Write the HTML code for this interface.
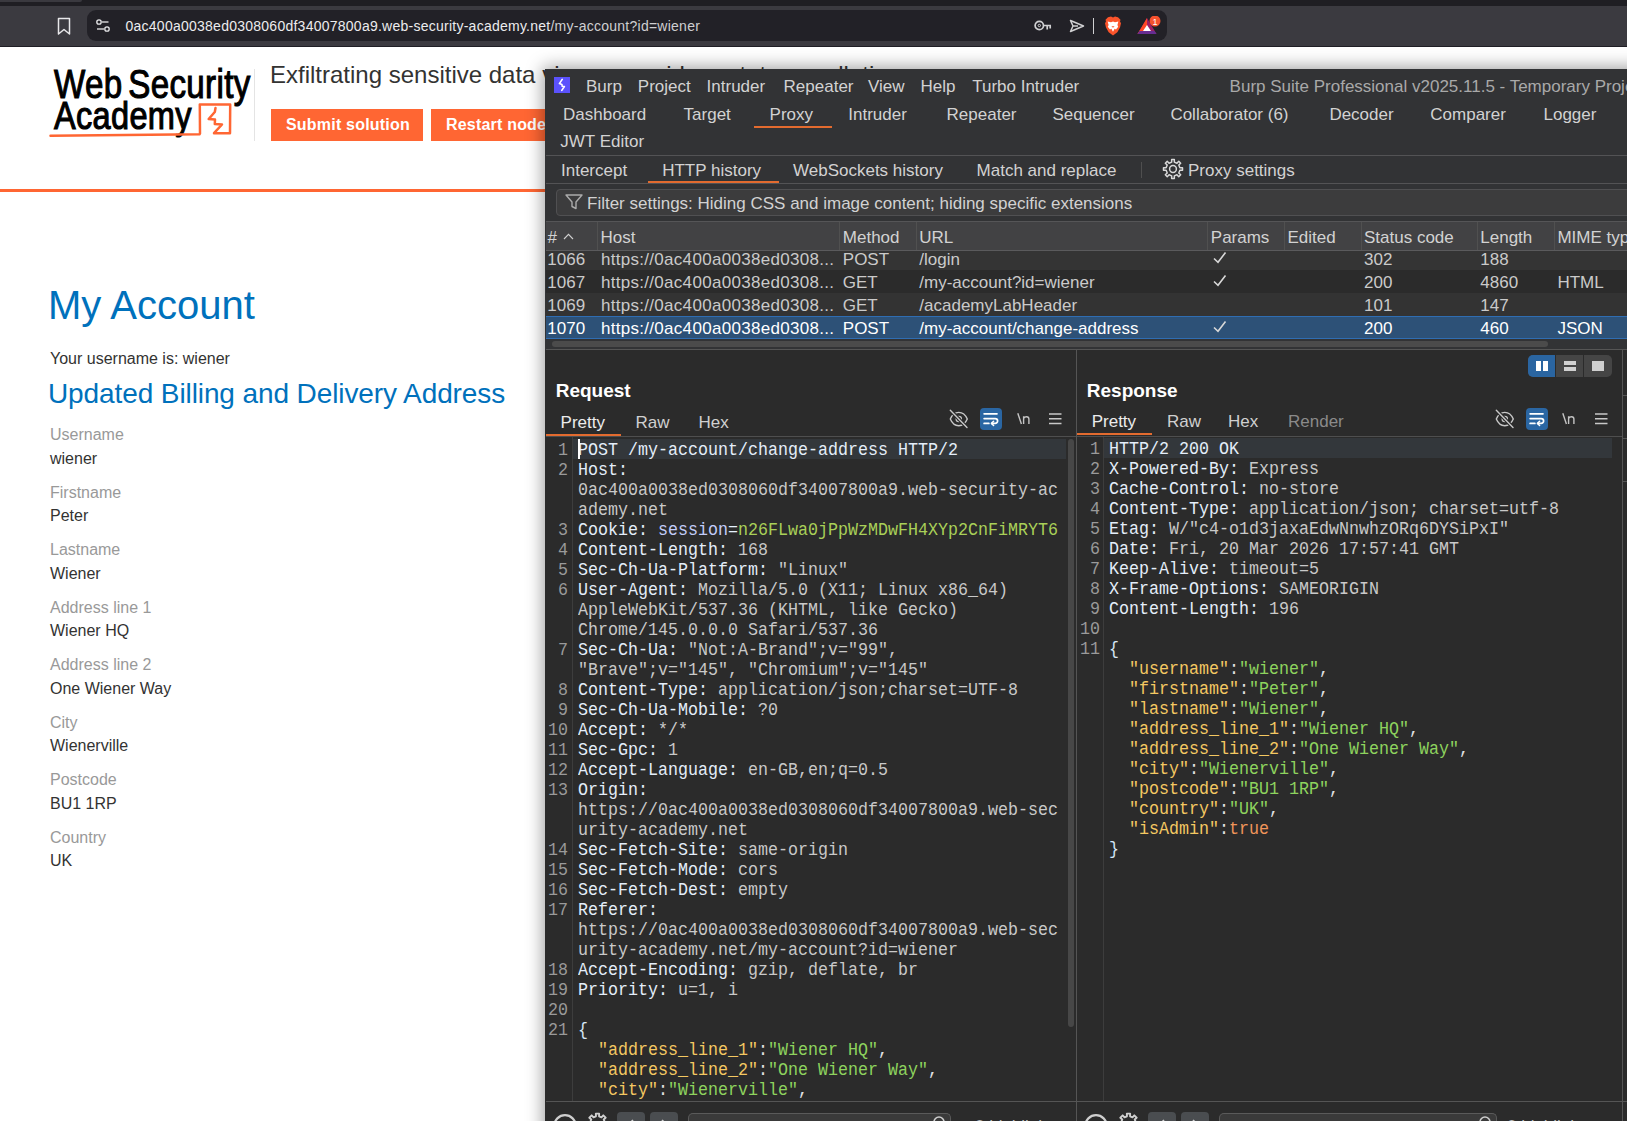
<!DOCTYPE html>
<html><head><meta charset="utf-8"><title>My Account</title>
<style>
html,body{margin:0;padding:0;width:1627px;height:1121px;overflow:hidden;background:#ffffff;position:relative}
.t{position:absolute;white-space:pre}
.c{position:absolute;white-space:pre;font-family:'Liberation Mono', monospace;font-size:17.5px;line-height:20px;transform-origin:0 0;transform:scaleX(0.95238)}
</style></head><body>
<div style="position:absolute;left:0px;top:0px;width:1627px;height:6px;background:#1f1e23;"></div>
<div style="position:absolute;left:0px;top:0px;width:82px;height:2px;background:#3a393f;border-radius:0 0 6px 0"></div>
<div style="position:absolute;left:0px;top:6px;width:1627px;height:40px;background:#3b3a40;"></div>
<div style="position:absolute;left:0px;top:46px;width:1627px;height:1px;background:#1f1e25;"></div>
<div style="position:absolute;left:87px;top:10px;width:1080px;height:31px;background:#222127;border-radius:9px"></div>
<svg style="position:absolute;left:55px;top:16px" width="18" height="20" viewBox="0 0 18 20"><path d="M3.5 2.5 H14.5 V18 L9 13.5 L3.5 18 Z" fill="none" stroke="#e8e8ea" stroke-width="1.5" stroke-linejoin="round"/></svg>
<svg style="position:absolute;left:95px;top:18px" width="16" height="16" viewBox="0 0 16 16"><circle cx="4" cy="4" r="2.2" fill="none" stroke="#e8e8ea" stroke-width="1.3"/><line x1="7" y1="4" x2="13.5" y2="4" stroke="#e8e8ea" stroke-width="1.3"/><circle cx="12" cy="11" r="2.2" fill="none" stroke="#e8e8ea" stroke-width="1.3"/><line x1="2" y1="11" x2="9" y2="11" stroke="#e8e8ea" stroke-width="1.3"/></svg>
<div style="position:absolute;left:125.5px;top:15.5px;font-family:'Liberation Sans', sans-serif;font-size:14px;line-height:20px;letter-spacing:0.25px;white-space:pre;color:#ececee">0ac400a0038ed0308060df34007800a9.web-security-academy.net<span style="color:#cfcfd1">/my-account?id=wiener</span></div>
<svg style="position:absolute;left:1034px;top:19px" width="18" height="14" viewBox="0 0 18 14"><circle cx="5.3" cy="6.5" r="4.2" fill="none" stroke="#d0d0d2" stroke-width="1.7"/><circle cx="5.3" cy="6.5" r="1.2" fill="none" stroke="#d0d0d2" stroke-width="1"/><path d="M9.5 6.5 H17 M13.2 6.5 V10.5 M16.2 6.5 V9.5" fill="none" stroke="#d0d0d2" stroke-width="1.7"/></svg>
<svg style="position:absolute;left:1069px;top:19px" width="16" height="14" viewBox="0 0 16 14"><path d="M1.5 1.5 L14.5 7 L1.5 12.5 L4 7 Z M4 7 H9" fill="none" stroke="#d0d0d2" stroke-width="1.5" stroke-linejoin="round"/></svg>
<div style="position:absolute;left:1093px;top:18px;width:1px;height:16px;background:#d0d0d2;"></div>
<svg style="position:absolute;left:1104px;top:16px" width="18" height="20" viewBox="0 0 18 20"><path d="M4 1.2 L7 0.6 L9 1.4 L11 0.6 L14 1.2 L16.5 3.8 L16 5.6 L17 7.2 L16 11.5 L13.3 16.2 L9 19.6 L4.7 16.2 L2 11.5 L1 7.2 L2 5.6 L1.5 3.8 Z" fill="#fb542b"/><path d="M3.6 5.4 L7 6.2 L9 5.4 L11 6.2 L14.4 5.4 L13.4 9 L14.2 10.8 L12 13.4 L10.6 12.8 L9 15.8 L7.4 12.8 L6 13.4 L3.8 10.8 L4.6 9 Z" fill="#ffffff"/><path d="M7.4 10.2 L9 11.8 L10.6 10.2 Z" fill="#fb542b"/></svg>
<svg style="position:absolute;left:1137px;top:16px" width="24" height="20" viewBox="0 0 24 20"><path d="M10 2 L19.5 18 H0.5 Z" fill="#9e1f63"/><path d="M10 2 L0.5 18 H6 L10 11 Z" fill="#ff4724"/><path d="M0.5 18 H19.5 L17.5 15 H2.5 Z" fill="#662d91"/><path d="M10 9 L14 15 H6 Z" fill="#ffffff"/><circle cx="18" cy="5" r="5.5" fill="#f4512e"/><text x="18" y="8.5" font-family="Liberation Sans" font-size="9" fill="#fff" text-anchor="middle">1</text></svg>
<div style="position:absolute;left:53.5px;top:62.4px;font-family:'Liberation Sans', sans-serif;font-size:40px;font-weight:400;line-height:45px;color:#000;letter-spacing:0.4px;word-spacing:-4.5px;transform-origin:0 0;transform:scaleX(0.828);white-space:pre;-webkit-text-stroke:1.1px #000">Web Security</div>
<div style="position:absolute;left:53.5px;top:93.8px;font-family:'Liberation Sans', sans-serif;font-size:38px;font-weight:400;line-height:45px;color:#000;letter-spacing:0.4px;transform-origin:0 0;transform:scaleX(0.855);white-space:pre;-webkit-text-stroke:1.1px #000">Academy</div>
<svg style="position:absolute;left:40px;top:95px" width="200" height="50" viewBox="40 95 200 50"><path d="M50.5 135.8 Q120 135.3 199.5 134.2 L200 133.5 L199.8 104.6 L230.2 104.4 L230 133.2 L214 133.2 L222 124.5 L214.8 124 L215 119.5 L208.7 119 L214.8 112 L215.5 108" fill="none" stroke="#ff6633" stroke-width="2.5" stroke-linejoin="round" stroke-linecap="round"/></svg>
<div style="position:absolute;left:254px;top:69px;width:1px;height:72px;background:#e4e4e4;"></div>
<div class="t" style="left:270.00px;top:59.88px;font-family:'Liberation Sans', sans-serif;font-size:24px;line-height:30px;color:#333332;font-weight:400;">Exfiltrating sensitive data via server-side prototype pollution</div>
<div style="position:absolute;left:271px;top:109px;width:152px;height:32px;background:#ff6633;"></div>
<div class="t" style="left:286.00px;top:115.45px;font-family:'Liberation Sans', sans-serif;font-size:16px;line-height:20px;color:#ffffff;font-weight:700;letter-spacing:0.2px">Submit solution</div>
<div style="position:absolute;left:431px;top:109px;width:152px;height:32px;background:#ff6633;"></div>
<div class="t" style="left:446.00px;top:115.45px;font-family:'Liberation Sans', sans-serif;font-size:16px;line-height:20px;color:#ffffff;font-weight:700;letter-spacing:0.2px">Restart node</div>
<div style="position:absolute;left:0px;top:189px;width:545px;height:3px;background:#ff6633;"></div>
<div class="t" style="left:48.00px;top:280.13px;font-family:'Liberation Sans', sans-serif;font-size:40px;line-height:50px;color:#0071bc;font-weight:400;">My Account</div>
<div class="t" style="left:50.00px;top:349.25px;font-family:'Liberation Sans', sans-serif;font-size:16px;line-height:20px;color:#333332;font-weight:400;">Your username is: wiener</div>
<div class="t" style="left:48.00px;top:375.79px;font-family:'Liberation Sans', sans-serif;font-size:28px;line-height:35px;color:#0071bc;font-weight:400;letter-spacing:-0.1px">Updated Billing and Delivery Address</div>
<div class="t" style="left:50.00px;top:425.45px;font-family:'Liberation Sans', sans-serif;font-size:16px;line-height:20px;color:#999999;font-weight:400;">Username</div>
<div class="t" style="left:50.00px;top:448.95px;font-family:'Liberation Sans', sans-serif;font-size:16px;line-height:20px;color:#333332;font-weight:400;">wiener</div>
<div class="t" style="left:50.00px;top:482.95px;font-family:'Liberation Sans', sans-serif;font-size:16px;line-height:20px;color:#999999;font-weight:400;">Firstname</div>
<div class="t" style="left:50.00px;top:506.45px;font-family:'Liberation Sans', sans-serif;font-size:16px;line-height:20px;color:#333332;font-weight:400;">Peter</div>
<div class="t" style="left:50.00px;top:540.45px;font-family:'Liberation Sans', sans-serif;font-size:16px;line-height:20px;color:#999999;font-weight:400;">Lastname</div>
<div class="t" style="left:50.00px;top:563.95px;font-family:'Liberation Sans', sans-serif;font-size:16px;line-height:20px;color:#333332;font-weight:400;">Wiener</div>
<div class="t" style="left:50.00px;top:597.95px;font-family:'Liberation Sans', sans-serif;font-size:16px;line-height:20px;color:#999999;font-weight:400;">Address line 1</div>
<div class="t" style="left:50.00px;top:621.45px;font-family:'Liberation Sans', sans-serif;font-size:16px;line-height:20px;color:#333332;font-weight:400;">Wiener HQ</div>
<div class="t" style="left:50.00px;top:655.45px;font-family:'Liberation Sans', sans-serif;font-size:16px;line-height:20px;color:#999999;font-weight:400;">Address line 2</div>
<div class="t" style="left:50.00px;top:678.95px;font-family:'Liberation Sans', sans-serif;font-size:16px;line-height:20px;color:#333332;font-weight:400;">One Wiener Way</div>
<div class="t" style="left:50.00px;top:712.95px;font-family:'Liberation Sans', sans-serif;font-size:16px;line-height:20px;color:#999999;font-weight:400;">City</div>
<div class="t" style="left:50.00px;top:736.45px;font-family:'Liberation Sans', sans-serif;font-size:16px;line-height:20px;color:#333332;font-weight:400;">Wienerville</div>
<div class="t" style="left:50.00px;top:770.45px;font-family:'Liberation Sans', sans-serif;font-size:16px;line-height:20px;color:#999999;font-weight:400;">Postcode</div>
<div class="t" style="left:50.00px;top:793.95px;font-family:'Liberation Sans', sans-serif;font-size:16px;line-height:20px;color:#333332;font-weight:400;">BU1 1RP</div>
<div class="t" style="left:50.00px;top:827.95px;font-family:'Liberation Sans', sans-serif;font-size:16px;line-height:20px;color:#999999;font-weight:400;">Country</div>
<div class="t" style="left:50.00px;top:851.45px;font-family:'Liberation Sans', sans-serif;font-size:16px;line-height:20px;color:#333332;font-weight:400;">UK</div>
<div style="position:absolute;left:545px;top:69px;width:1102px;height:1072px;background:#2b2b2b;box-shadow:0 0 16px 2px rgba(0,0,0,0.38)"></div>
<div style="position:absolute;left:545px;top:69px;width:1082px;height:152px;background:#323335;"></div>
<div style="position:absolute;left:545px;top:184px;width:1082px;height:37px;background:#323335;"></div>
<svg style="position:absolute;left:554px;top:77px" width="16" height="16" viewBox="0 0 16 16"><rect width="16" height="16" fill="#5b52fc"/><path d="M8.2 2.4 L5.4 6.6 L7.9 7.5 L8.2 9.3 L10.4 9.5 L7.8 13.4" fill="none" stroke="#fff" stroke-width="1.6" stroke-linejoin="round" stroke-linecap="round"/></svg>
<div class="t" style="left:586.00px;top:75.61px;font-family:'Liberation Sans', sans-serif;font-size:17px;line-height:21px;color:#d2d2d2;font-weight:400;">Burp</div>
<div class="t" style="left:637.80px;top:75.61px;font-family:'Liberation Sans', sans-serif;font-size:17px;line-height:21px;color:#d2d2d2;font-weight:400;">Project</div>
<div class="t" style="left:706.60px;top:75.61px;font-family:'Liberation Sans', sans-serif;font-size:17px;line-height:21px;color:#d2d2d2;font-weight:400;">Intruder</div>
<div class="t" style="left:783.60px;top:75.61px;font-family:'Liberation Sans', sans-serif;font-size:17px;line-height:21px;color:#d2d2d2;font-weight:400;">Repeater</div>
<div class="t" style="left:868.00px;top:75.61px;font-family:'Liberation Sans', sans-serif;font-size:17px;line-height:21px;color:#d2d2d2;font-weight:400;">View</div>
<div class="t" style="left:920.60px;top:75.61px;font-family:'Liberation Sans', sans-serif;font-size:17px;line-height:21px;color:#d2d2d2;font-weight:400;">Help</div>
<div class="t" style="left:972.20px;top:75.61px;font-family:'Liberation Sans', sans-serif;font-size:17px;line-height:21px;color:#d2d2d2;font-weight:400;">Turbo Intruder</div>
<div class="t" style="left:1229.60px;top:75.61px;font-family:'Liberation Sans', sans-serif;font-size:17px;line-height:21px;color:#a9a9a9;font-weight:400;">Burp Suite Professional v2025.11.5 - Temporary Project</div>
<div class="t" style="left:563.00px;top:104.11px;font-family:'Liberation Sans', sans-serif;font-size:17px;line-height:21px;color:#d2d2d2;font-weight:400;">Dashboard</div>
<div class="t" style="left:683.60px;top:104.11px;font-family:'Liberation Sans', sans-serif;font-size:17px;line-height:21px;color:#d2d2d2;font-weight:400;">Target</div>
<div class="t" style="left:769.60px;top:104.11px;font-family:'Liberation Sans', sans-serif;font-size:17px;line-height:21px;color:#d2d2d2;font-weight:400;">Proxy</div>
<div class="t" style="left:848.30px;top:104.11px;font-family:'Liberation Sans', sans-serif;font-size:17px;line-height:21px;color:#d2d2d2;font-weight:400;">Intruder</div>
<div class="t" style="left:946.60px;top:104.11px;font-family:'Liberation Sans', sans-serif;font-size:17px;line-height:21px;color:#d2d2d2;font-weight:400;">Repeater</div>
<div class="t" style="left:1052.40px;top:104.11px;font-family:'Liberation Sans', sans-serif;font-size:17px;line-height:21px;color:#d2d2d2;font-weight:400;">Sequencer</div>
<div class="t" style="left:1170.40px;top:104.11px;font-family:'Liberation Sans', sans-serif;font-size:17px;line-height:21px;color:#d2d2d2;font-weight:400;">Collaborator (6)</div>
<div class="t" style="left:1329.40px;top:104.11px;font-family:'Liberation Sans', sans-serif;font-size:17px;line-height:21px;color:#d2d2d2;font-weight:400;">Decoder</div>
<div class="t" style="left:1430.30px;top:104.11px;font-family:'Liberation Sans', sans-serif;font-size:17px;line-height:21px;color:#d2d2d2;font-weight:400;">Comparer</div>
<div class="t" style="left:1543.50px;top:104.11px;font-family:'Liberation Sans', sans-serif;font-size:17px;line-height:21px;color:#d2d2d2;font-weight:400;">Logger</div>
<div style="position:absolute;left:754px;top:126px;width:78px;height:2px;background:#e36b2f;"></div>
<div class="t" style="left:560.30px;top:131.31px;font-family:'Liberation Sans', sans-serif;font-size:17px;line-height:21px;color:#d2d2d2;font-weight:400;">JWT Editor</div>
<div style="position:absolute;left:546px;top:155px;width:1082px;height:1px;background:#535355;"></div>
<div class="t" style="left:561.00px;top:159.81px;font-family:'Liberation Sans', sans-serif;font-size:17px;line-height:21px;color:#d2d2d2;font-weight:400;">Intercept</div>
<div class="t" style="left:662.20px;top:159.81px;font-family:'Liberation Sans', sans-serif;font-size:17px;line-height:21px;color:#d2d2d2;font-weight:400;">HTTP history</div>
<div class="t" style="left:793.00px;top:159.81px;font-family:'Liberation Sans', sans-serif;font-size:17px;line-height:21px;color:#d2d2d2;font-weight:400;">WebSockets history</div>
<div class="t" style="left:976.60px;top:159.81px;font-family:'Liberation Sans', sans-serif;font-size:17px;line-height:21px;color:#d2d2d2;font-weight:400;">Match and replace</div>
<div class="t" style="left:1188.00px;top:159.81px;font-family:'Liberation Sans', sans-serif;font-size:17px;line-height:21px;color:#d2d2d2;font-weight:400;">Proxy settings</div>
<div style="position:absolute;left:648px;top:181px;width:131px;height:2px;background:#e36b2f;"></div>
<div style="position:absolute;left:1141px;top:162px;width:1px;height:16px;background:#4f4f4f;"></div>
<svg style="position:absolute;left:1161px;top:157px" width="24" height="24" viewBox="0 0 24 24"><path d="M10.69 5.12 L10.65 2.50 L13.35 2.50 L13.31 5.12 L15.93 6.21 L17.76 4.32 L19.68 6.24 L17.79 8.07 L18.88 10.69 L21.50 10.65 L21.50 13.35 L18.88 13.31 L17.79 15.93 L19.68 17.76 L17.76 19.68 L15.93 17.79 L13.31 18.88 L13.35 21.50 L10.65 21.50 L10.69 18.88 L8.07 17.79 L6.24 19.68 L4.32 17.76 L6.21 15.93 L5.12 13.31 L2.50 13.35 L2.50 10.65 L5.12 10.69 L6.21 8.07 L4.32 6.24 L6.24 4.32 L8.07 6.21 Z" fill="none" stroke="#d9d9d9" stroke-width="1.5" stroke-linejoin="round"/><circle cx="12" cy="12" r="3.4" fill="none" stroke="#d9d9d9" stroke-width="1.5"/></svg>
<div style="position:absolute;left:546px;top:183px;width:1082px;height:1px;background:#535355;"></div>
<div style="position:absolute;left:556px;top:189px;width:1100px;height:27px;background:#3c3c3d;border:1px solid #505052;border-radius:4px;box-sizing:border-box"></div>
<svg style="position:absolute;left:565px;top:194px" width="18" height="16" viewBox="0 0 18 16"><path d="M1 1 H17 L11 8 V14.5 L7 12.5 V8 Z" fill="none" stroke="#ababab" stroke-width="1.4" stroke-linejoin="round"/></svg>
<div class="t" style="left:587.00px;top:193.11px;font-family:'Liberation Sans', sans-serif;font-size:17px;line-height:21px;color:#d2d2d2;font-weight:400;">Filter settings: Hiding CSS and image content; hiding specific extensions</div>
<div style="position:absolute;left:546px;top:221px;width:1082px;height:30px;background:#424244;"></div>
<div style="position:absolute;left:546px;top:221px;width:1082px;height:1px;background:#555557;"></div>
<div style="position:absolute;left:546px;top:250px;width:1082px;height:1px;background:#5a5a5c;"></div>
<div style="position:absolute;left:597px;top:222px;width:1px;height:28px;background:#505050;"></div>
<div style="position:absolute;left:839px;top:222px;width:1px;height:28px;background:#505050;"></div>
<div style="position:absolute;left:916px;top:222px;width:1px;height:28px;background:#505050;"></div>
<div style="position:absolute;left:1207px;top:222px;width:1px;height:28px;background:#505050;"></div>
<div style="position:absolute;left:1284px;top:222px;width:1px;height:28px;background:#505050;"></div>
<div style="position:absolute;left:1361px;top:222px;width:1px;height:28px;background:#505050;"></div>
<div style="position:absolute;left:1477px;top:222px;width:1px;height:28px;background:#505050;"></div>
<div style="position:absolute;left:1554px;top:222px;width:1px;height:28px;background:#505050;"></div>
<div class="t" style="left:547.40px;top:227.01px;font-family:'Liberation Sans', sans-serif;font-size:17px;line-height:21px;color:#d2d2d2;font-weight:400;">#</div>
<div class="t" style="left:600.50px;top:227.01px;font-family:'Liberation Sans', sans-serif;font-size:17px;line-height:21px;color:#d2d2d2;font-weight:400;">Host</div>
<div class="t" style="left:842.80px;top:227.01px;font-family:'Liberation Sans', sans-serif;font-size:17px;line-height:21px;color:#d2d2d2;font-weight:400;">Method</div>
<div class="t" style="left:919.30px;top:227.01px;font-family:'Liberation Sans', sans-serif;font-size:17px;line-height:21px;color:#d2d2d2;font-weight:400;">URL</div>
<div class="t" style="left:1210.80px;top:227.01px;font-family:'Liberation Sans', sans-serif;font-size:17px;line-height:21px;color:#d2d2d2;font-weight:400;">Params</div>
<div class="t" style="left:1287.50px;top:227.01px;font-family:'Liberation Sans', sans-serif;font-size:17px;line-height:21px;color:#d2d2d2;font-weight:400;">Edited</div>
<div class="t" style="left:1364.00px;top:227.01px;font-family:'Liberation Sans', sans-serif;font-size:17px;line-height:21px;color:#d2d2d2;font-weight:400;">Status code</div>
<div class="t" style="left:1480.30px;top:227.01px;font-family:'Liberation Sans', sans-serif;font-size:17px;line-height:21px;color:#d2d2d2;font-weight:400;">Length</div>
<div class="t" style="left:1557.40px;top:227.01px;font-family:'Liberation Sans', sans-serif;font-size:17px;line-height:21px;color:#d2d2d2;font-weight:400;">MIME type</div>
<svg style="position:absolute;left:563px;top:231px" width="12" height="10" viewBox="0 0 12 10"><path d="M1 8 L5.5 3.4 L10 8" fill="none" stroke="#d0d0d0" stroke-width="1.1"/></svg>
<div style="position:absolute;left:546px;top:251px;width:1082px;height:19px;background:#343434;"></div>
<div style="position:absolute;left:546px;top:270px;width:1082px;height:23px;background:#2b2b2b;"></div>
<div style="position:absolute;left:546px;top:293px;width:1082px;height:23px;background:#333333;"></div>
<div style="position:absolute;left:546px;top:316px;width:1082px;height:23px;background:#2d5177;"></div>
<div style="position:absolute;left:546px;top:316px;width:1082px;height:1px;background:#2f6db2;"></div>
<div style="position:absolute;left:546px;top:338px;width:1082px;height:1px;background:#2f6db2;"></div>
<div style="position:absolute;left:546px;top:339px;width:1082px;height:10px;background:#323335;"></div>
<div style="position:absolute;left:552px;top:341px;width:996px;height:6px;background:#4b4b4b;border-radius:3px"></div>
<div style="position:absolute;left:546px;top:349px;width:1082px;height:1px;background:#555555;"></div>
<div style="position:absolute;left:545px;top:221px;width:1px;height:129px;background:#333436;"></div>
<div class="t" style="left:547.30px;top:249.41px;font-family:'Liberation Sans', sans-serif;font-size:17px;line-height:21px;color:#cacaca;font-weight:400;">1066</div>
<div class="t" style="left:600.90px;top:249.41px;font-family:'Liberation Sans', sans-serif;font-size:17px;line-height:21px;color:#cacaca;font-weight:400;letter-spacing:0.3px">https://0ac400a0038ed0308...</div>
<div class="t" style="left:842.80px;top:249.41px;font-family:'Liberation Sans', sans-serif;font-size:17px;line-height:21px;color:#cacaca;font-weight:400;">POST</div>
<div class="t" style="left:919.30px;top:249.41px;font-family:'Liberation Sans', sans-serif;font-size:17px;line-height:21px;color:#cacaca;font-weight:400;">/login</div>
<svg style="position:absolute;left:1212px;top:250.8px" width="16" height="14" viewBox="0 0 16 14"><path d="M2 7.5 L6 11.3 L13.5 1.5" fill="none" stroke="#d8d8d8" stroke-width="1.6"/></svg>
<div class="t" style="left:1364.00px;top:249.41px;font-family:'Liberation Sans', sans-serif;font-size:17px;line-height:21px;color:#cacaca;font-weight:400;">302</div>
<div class="t" style="left:1480.30px;top:249.41px;font-family:'Liberation Sans', sans-serif;font-size:17px;line-height:21px;color:#cacaca;font-weight:400;">188</div>
<div class="t" style="left:547.30px;top:272.21px;font-family:'Liberation Sans', sans-serif;font-size:17px;line-height:21px;color:#cacaca;font-weight:400;">1067</div>
<div class="t" style="left:600.90px;top:272.21px;font-family:'Liberation Sans', sans-serif;font-size:17px;line-height:21px;color:#cacaca;font-weight:400;letter-spacing:0.3px">https://0ac400a0038ed0308...</div>
<div class="t" style="left:842.80px;top:272.21px;font-family:'Liberation Sans', sans-serif;font-size:17px;line-height:21px;color:#cacaca;font-weight:400;">GET</div>
<div class="t" style="left:919.30px;top:272.21px;font-family:'Liberation Sans', sans-serif;font-size:17px;line-height:21px;color:#cacaca;font-weight:400;">/my-account?id=wiener</div>
<svg style="position:absolute;left:1212px;top:273.6px" width="16" height="14" viewBox="0 0 16 14"><path d="M2 7.5 L6 11.3 L13.5 1.5" fill="none" stroke="#d8d8d8" stroke-width="1.6"/></svg>
<div class="t" style="left:1364.00px;top:272.21px;font-family:'Liberation Sans', sans-serif;font-size:17px;line-height:21px;color:#cacaca;font-weight:400;">200</div>
<div class="t" style="left:1480.30px;top:272.21px;font-family:'Liberation Sans', sans-serif;font-size:17px;line-height:21px;color:#cacaca;font-weight:400;">4860</div>
<div class="t" style="left:1557.40px;top:272.21px;font-family:'Liberation Sans', sans-serif;font-size:17px;line-height:21px;color:#cacaca;font-weight:400;">HTML</div>
<div class="t" style="left:547.30px;top:295.21px;font-family:'Liberation Sans', sans-serif;font-size:17px;line-height:21px;color:#cacaca;font-weight:400;">1069</div>
<div class="t" style="left:600.90px;top:295.21px;font-family:'Liberation Sans', sans-serif;font-size:17px;line-height:21px;color:#cacaca;font-weight:400;letter-spacing:0.3px">https://0ac400a0038ed0308...</div>
<div class="t" style="left:842.80px;top:295.21px;font-family:'Liberation Sans', sans-serif;font-size:17px;line-height:21px;color:#cacaca;font-weight:400;">GET</div>
<div class="t" style="left:919.30px;top:295.21px;font-family:'Liberation Sans', sans-serif;font-size:17px;line-height:21px;color:#cacaca;font-weight:400;">/academyLabHeader</div>
<div class="t" style="left:1364.00px;top:295.21px;font-family:'Liberation Sans', sans-serif;font-size:17px;line-height:21px;color:#cacaca;font-weight:400;">101</div>
<div class="t" style="left:1480.30px;top:295.21px;font-family:'Liberation Sans', sans-serif;font-size:17px;line-height:21px;color:#cacaca;font-weight:400;">147</div>
<div class="t" style="left:547.30px;top:318.21px;font-family:'Liberation Sans', sans-serif;font-size:17px;line-height:21px;color:#ffffff;font-weight:400;">1070</div>
<div class="t" style="left:600.90px;top:318.21px;font-family:'Liberation Sans', sans-serif;font-size:17px;line-height:21px;color:#ffffff;font-weight:400;letter-spacing:0.3px">https://0ac400a0038ed0308...</div>
<div class="t" style="left:842.80px;top:318.21px;font-family:'Liberation Sans', sans-serif;font-size:17px;line-height:21px;color:#ffffff;font-weight:400;">POST</div>
<div class="t" style="left:919.30px;top:318.21px;font-family:'Liberation Sans', sans-serif;font-size:17px;line-height:21px;color:#ffffff;font-weight:400;">/my-account/change-address</div>
<svg style="position:absolute;left:1212px;top:319.6px" width="16" height="14" viewBox="0 0 16 14"><path d="M2 7.5 L6 11.3 L13.5 1.5" fill="none" stroke="#d8d8d8" stroke-width="1.6"/></svg>
<div class="t" style="left:1364.00px;top:318.21px;font-family:'Liberation Sans', sans-serif;font-size:17px;line-height:21px;color:#ffffff;font-weight:400;">200</div>
<div class="t" style="left:1480.30px;top:318.21px;font-family:'Liberation Sans', sans-serif;font-size:17px;line-height:21px;color:#ffffff;font-weight:400;">460</div>
<div class="t" style="left:1557.40px;top:318.21px;font-family:'Liberation Sans', sans-serif;font-size:17px;line-height:21px;color:#ffffff;font-weight:400;">JSON</div>
<div style="position:absolute;left:1076px;top:350px;width:1px;height:771px;background:#555555;"></div>
<div style="position:absolute;left:1528px;top:355px;width:84px;height:22px;background:#454545;border-radius:5px"></div>
<div style="position:absolute;left:1528px;top:355px;width:27px;height:22px;background:#2a65a1;border-radius:5px 0 0 5px"></div>
<div style="position:absolute;left:1555px;top:355px;width:1px;height:22px;background:#2b2b2b;"></div>
<div style="position:absolute;left:1583px;top:355px;width:1px;height:22px;background:#2b2b2b;"></div>
<div style="position:absolute;left:1536px;top:361px;width:5px;height:10px;background:#ffffff;"></div>
<div style="position:absolute;left:1543px;top:361px;width:5px;height:10px;background:#ffffff;"></div>
<div style="position:absolute;left:1564px;top:361px;width:12px;height:4px;background:#d0d0d0;"></div>
<div style="position:absolute;left:1564px;top:367px;width:12px;height:4px;background:#d0d0d0;"></div>
<div style="position:absolute;left:1592px;top:361px;width:12px;height:10px;background:#d0d0d0;"></div>
<div style="position:absolute;left:1622px;top:350px;width:1px;height:771px;background:#555555;"></div>
<div style="position:absolute;left:1623px;top:395px;width:4px;height:1px;background:#555555;"></div>
<div style="position:absolute;left:1623px;top:438px;width:4px;height:1px;background:#555555;"></div>
<div style="position:absolute;left:1623px;top:481px;width:4px;height:1px;background:#555555;"></div>
<div class="t" style="left:555.70px;top:379.41px;font-family:'Liberation Sans', sans-serif;font-size:19px;line-height:24px;color:#ffffff;font-weight:700;">Request</div>
<div class="t" style="left:560.60px;top:412.41px;font-family:'Liberation Sans', sans-serif;font-size:17px;line-height:21px;color:#ececec;font-weight:400;">Pretty</div>
<div class="t" style="left:635.60px;top:412.41px;font-family:'Liberation Sans', sans-serif;font-size:17px;line-height:21px;color:#d0d0d0;font-weight:400;">Raw</div>
<div class="t" style="left:698.60px;top:412.41px;font-family:'Liberation Sans', sans-serif;font-size:17px;line-height:21px;color:#d0d0d0;font-weight:400;">Hex</div>
<div style="position:absolute;left:546px;top:434px;width:75px;height:2px;background:#e36b2f;"></div>
<svg style="position:absolute;left:949px;top:409px" width="21" height="21" viewBox="0 0 21 21"><path d="M1.3 10 C5 1.1 14.5 1.1 18.3 10 C14.5 18.9 5 18.9 1.3 10 Z" fill="none" stroke="#c8c8c8" stroke-width="1.4" stroke-linejoin="round"/><circle cx="9.8" cy="10" r="2.6" fill="none" stroke="#c8c8c8" stroke-width="1.4"/><path d="M1.3 1.2 L18 18.5" stroke="#2b2b2b" stroke-width="3.6"/><path d="M1.3 1.2 L18 18.5" stroke="#c8c8c8" stroke-width="1.4" stroke-linecap="round"/></svg>
<div style="position:absolute;left:980px;top:408px;width:22px;height:22px;background:#2a66a3;border-radius:4px"></div>
<svg style="position:absolute;left:980px;top:408px" width="22" height="22" viewBox="0 0 22 22"><path d="M4.1 5.8 H17 M4.1 10.6 H15.2 A2.4 2.4 0 0 1 15.2 15.4 H12 M4.1 15.4 H8.9" fill="none" stroke="#ffffff" stroke-width="1.7" stroke-linecap="round"/><path d="M13.6 13.3 L11.4 15.4 L13.6 17.5" fill="none" stroke="#ffffff" stroke-width="1.5" stroke-linecap="round" stroke-linejoin="round"/></svg>
<svg style="position:absolute;left:1017px;top:412px" width="14" height="14" viewBox="0 0 14 14"><path d="M0.8 1.2 L4.4 12" stroke="#c4c4c4" stroke-width="1.4"/><path d="M6.6 4.2 V12 M6.6 6.4 C7.6 4.3 11.9 3.8 11.9 7 V12" fill="none" stroke="#c4c4c4" stroke-width="1.4"/></svg>
<svg style="position:absolute;left:1049px;top:412px" width="13" height="14" viewBox="0 0 13 14"><path d="M0 2 H12.5 M0 6.7 H12.5 M0 11.5 H12.5" stroke="#c8c8c8" stroke-width="1.4"/></svg>
<div style="position:absolute;left:546px;top:436px;width:530px;height:1px;background:#4e4e4e;"></div>
<div class="t" style="left:1086.80px;top:378.61px;font-family:'Liberation Sans', sans-serif;font-size:19px;line-height:24px;color:#ffffff;font-weight:700;">Response</div>
<div class="t" style="left:1091.70px;top:411.31px;font-family:'Liberation Sans', sans-serif;font-size:17px;line-height:21px;color:#ececec;font-weight:400;">Pretty</div>
<div class="t" style="left:1167.00px;top:411.31px;font-family:'Liberation Sans', sans-serif;font-size:17px;line-height:21px;color:#d0d0d0;font-weight:400;">Raw</div>
<div class="t" style="left:1228.00px;top:411.31px;font-family:'Liberation Sans', sans-serif;font-size:17px;line-height:21px;color:#d0d0d0;font-weight:400;">Hex</div>
<div class="t" style="left:1288.00px;top:411.31px;font-family:'Liberation Sans', sans-serif;font-size:17px;line-height:21px;color:#8a8a8a;font-weight:400;">Render</div>
<div style="position:absolute;left:1077px;top:433px;width:75px;height:2px;background:#e36b2f;"></div>
<svg style="position:absolute;left:1495px;top:409px" width="21" height="21" viewBox="0 0 21 21"><path d="M1.3 10 C5 1.1 14.5 1.1 18.3 10 C14.5 18.9 5 18.9 1.3 10 Z" fill="none" stroke="#c8c8c8" stroke-width="1.4" stroke-linejoin="round"/><circle cx="9.8" cy="10" r="2.6" fill="none" stroke="#c8c8c8" stroke-width="1.4"/><path d="M1.3 1.2 L18 18.5" stroke="#2b2b2b" stroke-width="3.6"/><path d="M1.3 1.2 L18 18.5" stroke="#c8c8c8" stroke-width="1.4" stroke-linecap="round"/></svg>
<div style="position:absolute;left:1526px;top:408px;width:22px;height:22px;background:#2a66a3;border-radius:4px"></div>
<svg style="position:absolute;left:1526px;top:408px" width="22" height="22" viewBox="0 0 22 22"><path d="M4.1 5.8 H17 M4.1 10.6 H15.2 A2.4 2.4 0 0 1 15.2 15.4 H12 M4.1 15.4 H8.9" fill="none" stroke="#ffffff" stroke-width="1.7" stroke-linecap="round"/><path d="M13.6 13.3 L11.4 15.4 L13.6 17.5" fill="none" stroke="#ffffff" stroke-width="1.5" stroke-linecap="round" stroke-linejoin="round"/></svg>
<svg style="position:absolute;left:1562px;top:412px" width="14" height="14" viewBox="0 0 14 14"><path d="M0.8 1.2 L4.4 12" stroke="#c4c4c4" stroke-width="1.4"/><path d="M6.6 4.2 V12 M6.6 6.4 C7.6 4.3 11.9 3.8 11.9 7 V12" fill="none" stroke="#c4c4c4" stroke-width="1.4"/></svg>
<svg style="position:absolute;left:1595px;top:412px" width="13" height="14" viewBox="0 0 13 14"><path d="M0 2 H12.5 M0 6.7 H12.5 M0 11.5 H12.5" stroke="#c8c8c8" stroke-width="1.4"/></svg>
<div style="position:absolute;left:1077px;top:436px;width:545px;height:1px;background:#4e4e4e;"></div>
<div style="position:absolute;left:546px;top:437px;width:530px;height:664px;background:#2b2b2b;"></div>
<div style="position:absolute;left:572px;top:437px;width:1px;height:664px;background:#3d3d3d;"></div>
<div style="position:absolute;left:573px;top:439px;width:493px;height:20px;background:#33373b;"></div>
<div style="position:absolute;left:1068px;top:439px;width:6px;height:588px;background:#474747;border-radius:3px"></div>
<div style="position:absolute;left:0;top:0;width:1627px;height:1101px;overflow:hidden">
<div class="c" style="left:578px;top:440.34px"><span style="color:#e4eefa">POST /my-account/change-address HTTP/2</span></div>
<div class="c" style="left:578px;top:460.34px"><span style="color:#e4eefa">Host:</span></div>
<div class="c" style="left:578px;top:480.34px"><span style="color:#c9c9c9">0ac400a0038ed0308060df34007800a9.web-security-ac</span></div>
<div class="c" style="left:578px;top:500.34px"><span style="color:#c9c9c9">ademy.net</span></div>
<div class="c" style="left:578px;top:520.34px"><span style="color:#e4eefa">Cookie:</span><span style="color:#c9c9c9"> </span><span style="color:#c3cdfa">session</span><span style="color:#e6f2ff">=</span><span style="color:#a9d058">n26FLwa0jPpWzMDwFH4XYp2CnFiMRYT6</span></div>
<div class="c" style="left:578px;top:540.34px"><span style="color:#e4eefa">Content-Length:</span><span style="color:#c9c9c9"> 168</span></div>
<div class="c" style="left:578px;top:560.34px"><span style="color:#e4eefa">Sec-Ch-Ua-Platform:</span><span style="color:#c9c9c9"> "Linux"</span></div>
<div class="c" style="left:578px;top:580.34px"><span style="color:#e4eefa">User-Agent:</span><span style="color:#c9c9c9"> Mozilla/5.0 (X11; Linux x86_64)</span></div>
<div class="c" style="left:578px;top:600.34px"><span style="color:#c9c9c9">AppleWebKit/537.36 (KHTML, like Gecko)</span></div>
<div class="c" style="left:578px;top:620.34px"><span style="color:#c9c9c9">Chrome/145.0.0.0 Safari/537.36</span></div>
<div class="c" style="left:578px;top:640.34px"><span style="color:#e4eefa">Sec-Ch-Ua:</span><span style="color:#c9c9c9"> "Not:A-Brand";v="99",</span></div>
<div class="c" style="left:578px;top:660.34px"><span style="color:#c9c9c9">"Brave";v="145", "Chromium";v="145"</span></div>
<div class="c" style="left:578px;top:680.34px"><span style="color:#e4eefa">Content-Type:</span><span style="color:#c9c9c9"> application/json;charset=UTF-8</span></div>
<div class="c" style="left:578px;top:700.34px"><span style="color:#e4eefa">Sec-Ch-Ua-Mobile:</span><span style="color:#c9c9c9"> ?0</span></div>
<div class="c" style="left:578px;top:720.34px"><span style="color:#e4eefa">Accept:</span><span style="color:#c9c9c9"> */*</span></div>
<div class="c" style="left:578px;top:740.34px"><span style="color:#e4eefa">Sec-Gpc:</span><span style="color:#c9c9c9"> 1</span></div>
<div class="c" style="left:578px;top:760.34px"><span style="color:#e4eefa">Accept-Language:</span><span style="color:#c9c9c9"> en-GB,en;q=0.5</span></div>
<div class="c" style="left:578px;top:780.34px"><span style="color:#e4eefa">Origin:</span></div>
<div class="c" style="left:578px;top:800.34px"><span style="color:#c9c9c9">https://0ac400a0038ed0308060df34007800a9.web-sec</span></div>
<div class="c" style="left:578px;top:820.34px"><span style="color:#c9c9c9">urity-academy.net</span></div>
<div class="c" style="left:578px;top:840.34px"><span style="color:#e4eefa">Sec-Fetch-Site:</span><span style="color:#c9c9c9"> same-origin</span></div>
<div class="c" style="left:578px;top:860.34px"><span style="color:#e4eefa">Sec-Fetch-Mode:</span><span style="color:#c9c9c9"> cors</span></div>
<div class="c" style="left:578px;top:880.34px"><span style="color:#e4eefa">Sec-Fetch-Dest:</span><span style="color:#c9c9c9"> empty</span></div>
<div class="c" style="left:578px;top:900.34px"><span style="color:#e4eefa">Referer:</span></div>
<div class="c" style="left:578px;top:920.34px"><span style="color:#c9c9c9">https://0ac400a0038ed0308060df34007800a9.web-sec</span></div>
<div class="c" style="left:578px;top:940.34px"><span style="color:#c9c9c9">urity-academy.net/my-account?id=wiener</span></div>
<div class="c" style="left:578px;top:960.34px"><span style="color:#e4eefa">Accept-Encoding:</span><span style="color:#c9c9c9"> gzip, deflate, br</span></div>
<div class="c" style="left:578px;top:980.34px"><span style="color:#e4eefa">Priority:</span><span style="color:#c9c9c9"> u=1, i</span></div>
<div class="c" style="left:578px;top:1020.34px"><span style="color:#d6e6f7">{</span></div>
<div class="c" style="left:578px;top:1040.34px"><span style="color:#f4c862">  "address_line_1"</span><span style="color:#e2e2e2">:</span><span style="color:#8ed35e">"Wiener HQ"</span><span style="color:#e2e2e2">,</span></div>
<div class="c" style="left:578px;top:1060.34px"><span style="color:#f4c862">  "address_line_2"</span><span style="color:#e2e2e2">:</span><span style="color:#8ed35e">"One Wiener Way"</span><span style="color:#e2e2e2">,</span></div>
<div class="c" style="left:578px;top:1080.34px"><span style="color:#f4c862">  "city"</span><span style="color:#e2e2e2">:</span><span style="color:#8ed35e">"Wienerville"</span><span style="color:#e2e2e2">,</span></div>
<div class="c" style="left:578px;top:1100.34px"><span style="color:#f4c862">  "postcode"</span><span style="color:#e2e2e2">:</span><span style="color:#8ed35e">"BU1 1RP"</span><span style="color:#e2e2e2">,</span></div>
<div class="c" style="left:558px;top:440.34px"><span style="color:#9a9a9a">1</span></div>
<div class="c" style="left:558px;top:460.34px"><span style="color:#9a9a9a">2</span></div>
<div class="c" style="left:558px;top:520.34px"><span style="color:#9a9a9a">3</span></div>
<div class="c" style="left:558px;top:540.34px"><span style="color:#9a9a9a">4</span></div>
<div class="c" style="left:558px;top:560.34px"><span style="color:#9a9a9a">5</span></div>
<div class="c" style="left:558px;top:580.34px"><span style="color:#9a9a9a">6</span></div>
<div class="c" style="left:558px;top:640.34px"><span style="color:#9a9a9a">7</span></div>
<div class="c" style="left:558px;top:680.34px"><span style="color:#9a9a9a">8</span></div>
<div class="c" style="left:558px;top:700.34px"><span style="color:#9a9a9a">9</span></div>
<div class="c" style="left:548px;top:720.34px"><span style="color:#9a9a9a">10</span></div>
<div class="c" style="left:548px;top:740.34px"><span style="color:#9a9a9a">11</span></div>
<div class="c" style="left:548px;top:760.34px"><span style="color:#9a9a9a">12</span></div>
<div class="c" style="left:548px;top:780.34px"><span style="color:#9a9a9a">13</span></div>
<div class="c" style="left:548px;top:840.34px"><span style="color:#9a9a9a">14</span></div>
<div class="c" style="left:548px;top:860.34px"><span style="color:#9a9a9a">15</span></div>
<div class="c" style="left:548px;top:880.34px"><span style="color:#9a9a9a">16</span></div>
<div class="c" style="left:548px;top:900.34px"><span style="color:#9a9a9a">17</span></div>
<div class="c" style="left:548px;top:960.34px"><span style="color:#9a9a9a">18</span></div>
<div class="c" style="left:548px;top:980.34px"><span style="color:#9a9a9a">19</span></div>
<div class="c" style="left:548px;top:1000.34px"><span style="color:#9a9a9a">20</span></div>
<div class="c" style="left:548px;top:1020.34px"><span style="color:#9a9a9a">21</span></div>
</div>
<div style="position:absolute;left:578px;top:439px;width:2px;height:20px;background:#ffffff;"></div>
<div style="position:absolute;left:1077px;top:437px;width:545px;height:664px;background:#2b2b2b;"></div>
<div style="position:absolute;left:1103px;top:437px;width:1px;height:664px;background:#3d3d3d;"></div>
<div style="position:absolute;left:1104px;top:438px;width:508px;height:20px;background:#33373b;"></div>
<div class="c" style="left:1109px;top:439.34px"><span style="color:#e4eefa">HTTP/2 200 OK</span></div>
<div class="c" style="left:1109px;top:459.34px"><span style="color:#e4eefa">X-Powered-By:</span><span style="color:#c9c9c9"> Express</span></div>
<div class="c" style="left:1109px;top:479.34px"><span style="color:#e4eefa">Cache-Control:</span><span style="color:#c9c9c9"> no-store</span></div>
<div class="c" style="left:1109px;top:499.34px"><span style="color:#e4eefa">Content-Type:</span><span style="color:#c9c9c9"> application/json; charset=utf-8</span></div>
<div class="c" style="left:1109px;top:519.34px"><span style="color:#e4eefa">Etag:</span><span style="color:#c9c9c9"> W/"c4-o1d3jaxaEdwNnwhzORq6DYSiPxI"</span></div>
<div class="c" style="left:1109px;top:539.34px"><span style="color:#e4eefa">Date:</span><span style="color:#c9c9c9"> Fri, 20 Mar 2026 17:57:41 GMT</span></div>
<div class="c" style="left:1109px;top:559.34px"><span style="color:#e4eefa">Keep-Alive:</span><span style="color:#c9c9c9"> timeout=5</span></div>
<div class="c" style="left:1109px;top:579.34px"><span style="color:#e4eefa">X-Frame-Options:</span><span style="color:#c9c9c9"> SAMEORIGIN</span></div>
<div class="c" style="left:1109px;top:599.34px"><span style="color:#e4eefa">Content-Length:</span><span style="color:#c9c9c9"> 196</span></div>
<div class="c" style="left:1109px;top:639.34px"><span style="color:#d6e6f7">{</span></div>
<div class="c" style="left:1109px;top:659.34px"><span style="color:#f4c862">  "username"</span><span style="color:#e2e2e2">:</span><span style="color:#8ed35e">"wiener"</span><span style="color:#e2e2e2">,</span></div>
<div class="c" style="left:1109px;top:679.34px"><span style="color:#f4c862">  "firstname"</span><span style="color:#e2e2e2">:</span><span style="color:#8ed35e">"Peter"</span><span style="color:#e2e2e2">,</span></div>
<div class="c" style="left:1109px;top:699.34px"><span style="color:#f4c862">  "lastname"</span><span style="color:#e2e2e2">:</span><span style="color:#8ed35e">"Wiener"</span><span style="color:#e2e2e2">,</span></div>
<div class="c" style="left:1109px;top:719.34px"><span style="color:#f4c862">  "address_line_1"</span><span style="color:#e2e2e2">:</span><span style="color:#8ed35e">"Wiener HQ"</span><span style="color:#e2e2e2">,</span></div>
<div class="c" style="left:1109px;top:739.34px"><span style="color:#f4c862">  "address_line_2"</span><span style="color:#e2e2e2">:</span><span style="color:#8ed35e">"One Wiener Way"</span><span style="color:#e2e2e2">,</span></div>
<div class="c" style="left:1109px;top:759.34px"><span style="color:#f4c862">  "city"</span><span style="color:#e2e2e2">:</span><span style="color:#8ed35e">"Wienerville"</span><span style="color:#e2e2e2">,</span></div>
<div class="c" style="left:1109px;top:779.34px"><span style="color:#f4c862">  "postcode"</span><span style="color:#e2e2e2">:</span><span style="color:#8ed35e">"BU1 1RP"</span><span style="color:#e2e2e2">,</span></div>
<div class="c" style="left:1109px;top:799.34px"><span style="color:#f4c862">  "country"</span><span style="color:#e2e2e2">:</span><span style="color:#8ed35e">"UK"</span><span style="color:#e2e2e2">,</span></div>
<div class="c" style="left:1109px;top:819.34px"><span style="color:#f4c862">  "isAdmin"</span><span style="color:#e2e2e2">:</span><span style="color:#f0955a">true</span></div>
<div class="c" style="left:1109px;top:839.34px"><span style="color:#d6e6f7">}</span></div>
<div class="c" style="left:1090px;top:439.34px"><span style="color:#9a9a9a">1</span></div>
<div class="c" style="left:1090px;top:459.34px"><span style="color:#9a9a9a">2</span></div>
<div class="c" style="left:1090px;top:479.34px"><span style="color:#9a9a9a">3</span></div>
<div class="c" style="left:1090px;top:499.34px"><span style="color:#9a9a9a">4</span></div>
<div class="c" style="left:1090px;top:519.34px"><span style="color:#9a9a9a">5</span></div>
<div class="c" style="left:1090px;top:539.34px"><span style="color:#9a9a9a">6</span></div>
<div class="c" style="left:1090px;top:559.34px"><span style="color:#9a9a9a">7</span></div>
<div class="c" style="left:1090px;top:579.34px"><span style="color:#9a9a9a">8</span></div>
<div class="c" style="left:1090px;top:599.34px"><span style="color:#9a9a9a">9</span></div>
<div class="c" style="left:1080px;top:619.34px"><span style="color:#9a9a9a">10</span></div>
<div class="c" style="left:1080px;top:639.34px"><span style="color:#9a9a9a">11</span></div>
<div style="position:absolute;left:546px;top:1101px;width:1081px;height:1px;background:#555555;"></div>
<div style="position:absolute;left:546px;top:1102px;width:530px;height:19px;background:#2b2b2b;"></div>
<div style="position:absolute;left:1077px;top:1102px;width:545px;height:19px;background:#2b2b2b;"></div>
<div style="position:absolute;left:1076px;top:1101px;width:1px;height:20px;background:#555555;"></div>
<svg style="position:absolute;left:553px;top:1112.5px" width="28" height="28" viewBox="0 0 28 28"><circle cx="12" cy="13" r="10.8" fill="none" stroke="#cfcfcf" stroke-width="2.2"/><circle cx="12" cy="13" r="4" fill="none" stroke="#cfcfcf" stroke-width="2"/></svg>
<svg style="position:absolute;left:585px;top:1111px" width="26" height="26" viewBox="0 0 26 26"><path d="M10.94 5.27 L10.86 2.64 L14.14 2.64 L14.06 5.27 L16.51 6.28 L18.31 4.36 L20.64 6.69 L18.72 8.49 L19.73 10.94 L22.36 10.86 L22.36 14.14 L19.73 14.06 L18.72 16.51 L20.64 18.31 L18.31 20.64 L16.51 18.72 L14.06 19.73 L14.14 22.36 L10.86 22.36 L10.94 19.73 L8.49 18.72 L6.69 20.64 L4.36 18.31 L6.28 16.51 L5.27 14.06 L2.64 14.14 L2.64 10.86 L5.27 10.94 L6.28 8.49 L4.36 6.69 L6.69 4.36 L8.49 6.28 Z" fill="none" stroke="#cfcfcf" stroke-width="1.9" stroke-linejoin="round"/></svg>
<div style="position:absolute;left:617px;top:1112px;width:28px;height:12px;background:#4a4d50;border-radius:4px 4px 0 0"></div>
<div style="position:absolute;left:650px;top:1112px;width:28px;height:12px;background:#4a4d50;border-radius:4px 4px 0 0"></div>
<svg style="position:absolute;left:617px;top:1112px" width="61" height="12" viewBox="0 0 61 12"><path d="M16 8 L12 12 M45 8 L49 12" fill="none" stroke="#d0d0d0" stroke-width="1.6"/></svg>
<div style="position:absolute;left:688px;top:1113px;width:263px;height:10px;background:#3a3a3a;border:1px solid #5a5a5a;border-bottom:none;border-radius:5px 5px 0 0;box-sizing:border-box"></div>
<svg style="position:absolute;left:931px;top:1113px" width="16" height="10" viewBox="0 0 16 10"><circle cx="8" cy="9" r="5" fill="none" stroke="#cfcfcf" stroke-width="1.6"/></svg>
<div class="t" style="left:975.00px;top:1115.61px;font-family:'Liberation Sans', sans-serif;font-size:17px;line-height:21px;color:#bdbdbd;font-weight:400;">0 highlights</div>
<svg style="position:absolute;left:1084px;top:1112.5px" width="28" height="28" viewBox="0 0 28 28"><circle cx="12" cy="13" r="10.8" fill="none" stroke="#cfcfcf" stroke-width="2.2"/><circle cx="12" cy="13" r="4" fill="none" stroke="#cfcfcf" stroke-width="2"/></svg>
<svg style="position:absolute;left:1116px;top:1111px" width="26" height="26" viewBox="0 0 26 26"><path d="M10.94 5.27 L10.86 2.64 L14.14 2.64 L14.06 5.27 L16.51 6.28 L18.31 4.36 L20.64 6.69 L18.72 8.49 L19.73 10.94 L22.36 10.86 L22.36 14.14 L19.73 14.06 L18.72 16.51 L20.64 18.31 L18.31 20.64 L16.51 18.72 L14.06 19.73 L14.14 22.36 L10.86 22.36 L10.94 19.73 L8.49 18.72 L6.69 20.64 L4.36 18.31 L6.28 16.51 L5.27 14.06 L2.64 14.14 L2.64 10.86 L5.27 10.94 L6.28 8.49 L4.36 6.69 L6.69 4.36 L8.49 6.28 Z" fill="none" stroke="#cfcfcf" stroke-width="1.9" stroke-linejoin="round"/></svg>
<div style="position:absolute;left:1148px;top:1112px;width:28px;height:12px;background:#4a4d50;border-radius:4px 4px 0 0"></div>
<div style="position:absolute;left:1181px;top:1112px;width:28px;height:12px;background:#4a4d50;border-radius:4px 4px 0 0"></div>
<svg style="position:absolute;left:1148px;top:1112px" width="61" height="12" viewBox="0 0 61 12"><path d="M16 8 L12 12 M45 8 L49 12" fill="none" stroke="#d0d0d0" stroke-width="1.6"/></svg>
<div style="position:absolute;left:1219px;top:1113px;width:278px;height:10px;background:#3a3a3a;border:1px solid #5a5a5a;border-bottom:none;border-radius:5px 5px 0 0;box-sizing:border-box"></div>
<svg style="position:absolute;left:1477px;top:1113px" width="16" height="10" viewBox="0 0 16 10"><circle cx="8" cy="9" r="5" fill="none" stroke="#cfcfcf" stroke-width="1.6"/></svg>
<div class="t" style="left:1507.00px;top:1115.61px;font-family:'Liberation Sans', sans-serif;font-size:17px;line-height:21px;color:#bdbdbd;font-weight:400;">0 highlights</div>
</body></html>
